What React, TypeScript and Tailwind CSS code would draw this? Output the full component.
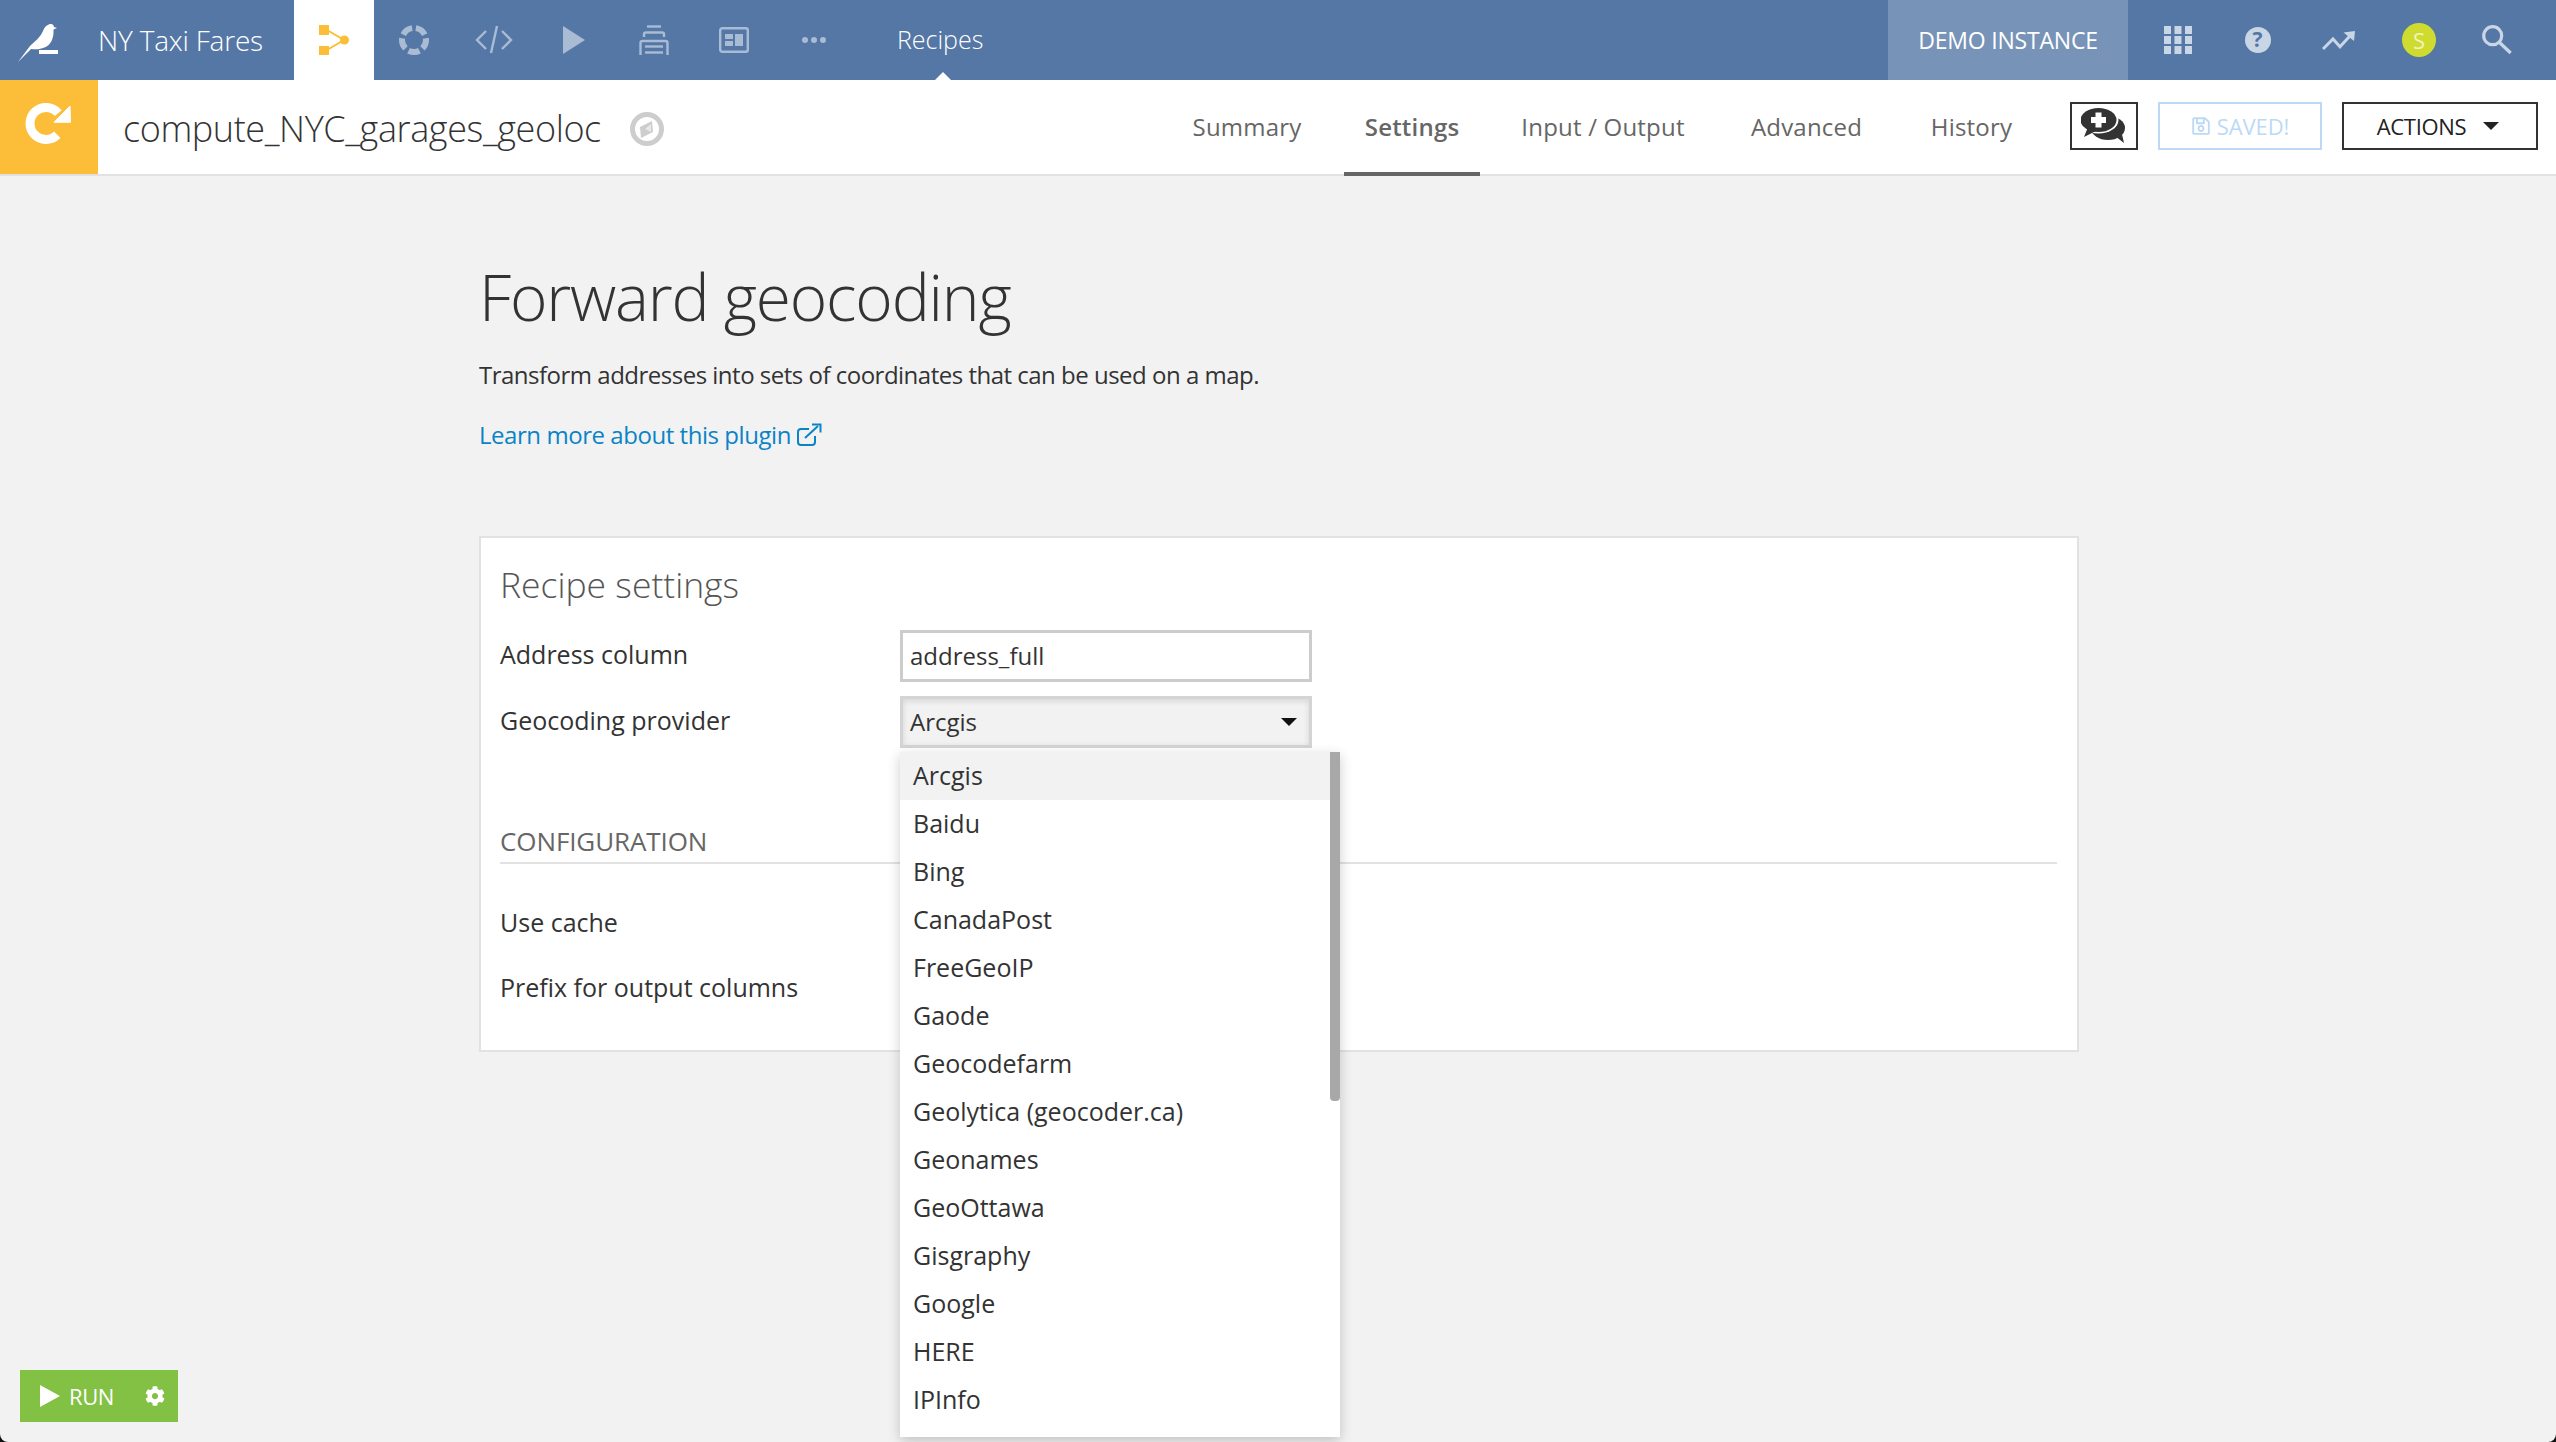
import { FaCog, FaRegSave } from 'react-icons/fa'

const providers = [
  'Arcgis',
  'Baidu',
  'Bing',
  'CanadaPost',
  'FreeGeoIP',
  'Gaode',
  'Geocodefarm',
  'Geolytica (geocoder.ca)',
  'Geonames',
  'GeoOttawa',
  'Gisgraphy',
  'Google',
  'HERE',
  'IPInfo',
]

const tabs = [
  { label: 'Summary', width: 'w-[194px]' },
  { label: 'Settings', width: 'w-[136px]', active: true },
  { label: 'Input / Output', width: 'w-[246px]' },
  { label: 'Advanced', width: 'w-[161px]' },
  { label: 'History', width: 'w-[169px]' },
]

const BirdLogo = () => (
  <svg width="44" height="44" viewBox="0 0 44 44" className="fill-white">
    <g transform="translate(0 4)">
      <path d="M0 40 L12 24 C16 20 22 16 25 9 C27 4 30 2 33 2 C35 2 36 4 36 5 L39 6 L35.5 7.5 C36 16 33 24 25 26 C20 28 16 27 13 27 Z" />
      <rect x="21" y="28" width="19" height="4" />
    </g>
  </svg>
)

const FlowIcon = () => (
  <svg width="30" height="30" viewBox="0 0 30 30">
    <rect x="0" y="0" width="10" height="10" fill="#fcbd38" />
    <rect x="0" y="21" width="10" height="9" fill="#fcbd38" />
    <circle cx="25.5" cy="15" r="4.5" fill="#fcbd38" />
    <path d="M8 5 L25 15 L8 25" fill="none" stroke="#fcbd38" strokeWidth="2" />
  </svg>
)

const CycleIcon = () => (
  <svg width="30" height="30" viewBox="0 0 30 30">
    <circle
      cx="15"
      cy="15"
      r="12"
      fill="none"
      stroke="#a9bcd4"
      strokeWidth="6"
      pathLength="100"
      strokeDasharray="15 5"
      strokeDashoffset="-2.5"
      transform="rotate(-90 15 15)"
    />
  </svg>
)

const CodeIcon = () => (
  <svg width="38" height="30" viewBox="0 0 38 30" fill="none" stroke="#a9bcd4" strokeWidth="2.4">
    <path d="M11 6 L2 15 L11 24" />
    <path d="M27 6 L36 15 L27 24" />
    <path d="M22 1 L16 28" />
  </svg>
)

const PlayIcon = () => (
  <svg width="24" height="28" viewBox="0 0 24 28">
    <path d="M1 0 L23 14 L1 28 Z" fill="#a9bcd4" />
  </svg>
)

const StackIcon = () => (
  <svg width="30" height="30" viewBox="0 0 30 30" fill="none" stroke="#a9bcd4" strokeWidth="2.4">
    <path d="M8 1.5 H22" />
    <path d="M5 12 V9 Q5 7.5 7 7.5 H23 Q25 7.5 25 9 V12" />
    <path d="M1.5 30 V18 Q1.5 16 3.5 16 H26.5 Q28.5 16 28.5 18 V30" />
    <path d="M6 21.5 H24" />
    <path d="M6 27.5 H24" />
  </svg>
)

const DashboardIcon = () => (
  <svg width="30" height="26" viewBox="0 0 30 26">
    <rect x="1.2" y="1.2" width="27.6" height="23.6" rx="2" fill="none" stroke="#a9bcd4" strokeWidth="2.4" />
    <rect x="6" y="7" width="8" height="5" fill="#a9bcd4" />
    <rect x="6" y="14" width="8" height="5" fill="#a9bcd4" />
    <rect x="16" y="7" width="8" height="12" fill="#a9bcd4" />
  </svg>
)

const DotsIcon = () => (
  <svg width="26" height="8" viewBox="0 0 26 8" fill="#a9bcd4">
    <circle cx="4" cy="4" r="3" />
    <circle cx="13" cy="4" r="3" />
    <circle cx="22" cy="4" r="3" />
  </svg>
)

const RefreshIcon = () => (
  <svg width="50" height="50" viewBox="0 0 50 50">
    <path d="M34.3 11.2 A16 16 0 1 0 33.3 32.8" fill="none" stroke="#fff" strokeWidth="9" />
    <path d="M46 4 L46.5 20.3 L30 20.3 Z" fill="#fff" stroke="#fff" strokeWidth="1" strokeLinejoin="round" />
  </svg>
)

const CompassIcon = () => (
  <svg width="36" height="36" viewBox="0 0 36 36">
    <circle cx="18" cy="18" r="14.5" fill="none" stroke="#cdcdcd" strokeWidth="5" />
    <path d="M11 16 L23 10 L24 21 L12 27 Z" fill="#cdcdcd" />
    <path d="M16 18 L22 13 L22 21 Z" fill="#e8e8e8" />
  </svg>
)

const GridIcon = () => (
  <svg width="28" height="28" viewBox="0 0 28 28" fill="#c9d6e5">
    <rect x="0" y="0" width="7" height="8" />
    <rect x="10.5" y="0" width="7" height="8" />
    <rect x="21" y="0" width="7" height="8" />
    <rect x="0" y="10" width="7" height="8" />
    <rect x="10.5" y="10" width="7" height="8" />
    <rect x="21" y="10" width="7" height="8" />
    <rect x="0" y="20" width="7" height="8" />
    <rect x="10.5" y="20" width="7" height="8" />
    <rect x="21" y="20" width="7" height="8" />
  </svg>
)

const TrendIcon = () => (
  <svg width="34" height="26" viewBox="0 0 34 26">
    <path d="M1 22 L11 12 L18 19.7 L29.7 7" fill="none" stroke="#c9d6e5" strokeWidth="3" />
    <path d="M21.5 5.5 L33 4 L32 14 Z" fill="#c9d6e5" />
  </svg>
)

const SearchIcon = () => (
  <svg width="30" height="30" viewBox="0 0 30 30" fill="none" stroke="#c9d6e5" strokeWidth="3.2">
    <circle cx="10.7" cy="10.7" r="9" />
    <path d="M17 17 L28.7 28" />
  </svg>
)

const ChatPlusIcon = () => (
  <svg width="46" height="40" viewBox="0 0 46 40">
    {/* 뒤쪽 말풍선 */}
    <ellipse cx="27" cy="22" rx="17" ry="12" fill="#333" />
    <path d="M34 30 L43 37 L40 24 Z" fill="#333" />
    {/* 앞쪽 말풍선 */}
    <ellipse cx="17.5" cy="14" rx="20" ry="13.5" fill="#fff" />
    <ellipse cx="17.5" cy="14" rx="18" ry="12" fill="#333" />
    <path d="M7 21 L3 31 L15 25 Z" fill="#333" />
    <path d="M14.5 6.5 H20.5 V11 H25 V17 H20.5 V21.5 H14.5 V17 H10 V11 H14.5 Z" fill="#fff" />
  </svg>
)

const ExternalIcon = () => (
  <svg width="26" height="24" viewBox="0 0 26 24" fill="none" stroke="#0a84c6" strokeWidth="2">
    <path d="M19 13 V19 Q19 22 16 22 H5 Q2 22 2 19 V9 Q2 6 5 6 H13" />
    <path d="M9 15 L22 3" />
    <path d="M16 1.5 H24.5 V9.5" />
  </svg>
)

const Caret = ({ className }: { className: string }) => <span className={`inline-block h-0 w-0 border-x-[8px] border-t-[8px] border-x-transparent ${className}`} />

const NavSlot = ({ children }: { children: React.ReactNode }) => <div className="flex h-full w-20 items-center justify-center">{children}</div>

export default function App() {
  return (
    <div className="h-[1442px] w-[2556px] bg-[#111]">
      <div className="relative h-full w-full overflow-hidden rounded-b-[8px] bg-[#f2f2f2] font-['Open_Sans','Noto_Sans',sans-serif] text-[24px] text-[#333]">
        {/* 상단 내비게이션 */}
        <header className="flex h-20 items-center bg-[#5577a5] text-white">
          <div className="flex h-full w-[294px] items-center">
            <div className="ml-[18px] flex w-[80px]">
              <BirdLogo />
            </div>
            <span className="text-[28px] font-light tracking-[-0.2px]">NY Taxi Fares</span>
          </div>
          <div className="flex h-full w-20 items-center justify-center bg-white">
            <FlowIcon />
          </div>
          <NavSlot><CycleIcon /></NavSlot>
          <NavSlot><CodeIcon /></NavSlot>
          <NavSlot><PlayIcon /></NavSlot>
          <NavSlot><StackIcon /></NavSlot>
          <NavSlot><DashboardIcon /></NavSlot>
          <NavSlot><DotsIcon /></NavSlot>
          <div className="relative ml-[43px] flex h-full items-center">
            <span className="text-[25px] font-light text-white">Recipes</span>
            <span className="absolute bottom-0 left-[38px] h-0 w-0 border-x-[8px] border-b-[8px] border-x-transparent border-b-white" />
          </div>
          <div className="ml-auto flex h-full w-[240px] items-center justify-center bg-[#7793b8] text-[23px] tracking-[-0.2px]">DEMO INSTANCE</div>
          <div className="flex h-full w-[428px] items-center">
            <div className="flex w-[98px] justify-center pl-[1px]"><GridIcon /></div>
            <div className="flex w-[62px] justify-center pl-[1px]">
              <span className="flex h-[26px] w-[26px] items-center justify-center rounded-full bg-[#c9d6e5] text-[21px] font-bold text-[#5577a5]">?</span>
            </div>
            <div className="flex w-[102px] justify-center"><TrendIcon /></div>
            <div className="flex w-[56px] justify-center pl-[2px]">
              <span className="flex h-[34px] w-[34px] items-center justify-center rounded-full bg-[#cfdc2f] text-[22px] text-[#f0f4c0]">S</span>
            </div>
            <div className="flex w-[100px] justify-center pl-[2px]"><SearchIcon /></div>
          </div>
        </header>

        {/* 레시피 헤더 */}
        <div className="flex h-24 items-stretch border-b-2 border-[#e2e2e2] bg-white">
          <div className="flex h-[94px] w-[98px] items-center justify-center bg-[#fcbd38]">
            <RefreshIcon />
          </div>
          <div className="ml-[25px] flex w-[1027px] items-center pt-1">
            <span className="text-[36px] font-light tracking-[-0.4px]">compute_NYC_garages_geoloc</span>
            <span className="ml-[28px] flex"><CompassIcon /></span>
          </div>
          <nav className="flex h-[94px] tracking-[0.2px] text-[#666]">
            {tabs.map(tab => (
              <div key={tab.label} className={`relative flex items-center justify-center ${tab.width} ${tab.active ? 'font-semibold' : ''}`}>
                {tab.label}
                {tab.active && <span className="absolute bottom-[-2px] left-0 h-1 w-full bg-[#666]" />}
              </div>
            ))}
          </nav>
          <div className="ml-[14px] flex items-start gap-[20px] pt-[22px]">
            <div className="flex h-12 w-[68px] items-center justify-center border-2 border-[#333] bg-white">
              <ChatPlusIcon />
            </div>
            <div className="flex h-12 w-[164px] items-center justify-center gap-[6px] border-2 border-[#bcd9f5] text-[22px] tracking-[-0.1px] text-[#bcd9f5]">
              <FaRegSave size={20} />
              SAVED!
            </div>
            <div className="flex h-12 w-[196px] items-center justify-center gap-[17px] border-2 border-[#333] pr-1 text-[22px] tracking-[-0.3px] text-[#222]">
              ACTIONS
              <Caret className="border-t-[#222]" />
            </div>
          </div>
        </div>

        {/* 본문 */}
        <main className="ml-[479px] w-[1600px] pt-[81px]">
          <h1 className="h-20 text-[64px] leading-[80px] font-light tracking-[-1.2px]">Forward geocoding</h1>
          <p className="mt-5 h-9 leading-9 tracking-[-0.5px]">Transform addresses into sets of coordinates that can be used on a map.</p>
          <a className="mt-6 flex h-9 items-center gap-[5px] leading-9 tracking-[-0.45px] text-[#0a84c6]">
            Learn more about this plugin
            <ExternalIcon />
          </a>

          <section className="mt-[83px] h-[516px] border-2 border-[#e2e2e2] bg-white pt-[22px] pr-5 pl-[19px] text-[25px]">
            <h2 className="h-12 text-[35.5px] leading-12 font-light text-[#555]">Recipe settings</h2>
            <div className="mt-[22px] flex h-[52px] items-center">
              <label className="w-[400px] pb-[3px]">Address column</label>
              <div className="flex h-[52px] w-[412px] items-center border-[3px] border-[#ccc] bg-white pl-[7px] text-[24px]">address_full</div>
            </div>
            <div className="mt-[14px] flex h-[52px] items-center">
              <label className="w-[400px] pb-[3px]">Geocoding provider</label>
              <div className="flex h-[52px] w-[412px] items-center justify-between border-[3px] border-[#d4d4d4] bg-[#f2f2f2] pr-[12px] pl-[7px] text-[24px] shadow-[inset_0_2px_6px_rgba(0,0,0,0.12)]">
                Arcgis
                <Caret className="border-t-[#111]" />
              </div>
            </div>
            <div className="mt-[78px] h-[38px] border-b-2 border-[#e2e2e2] text-[26px] leading-[31px] tracking-[-0.1px] text-[#666]">CONFIGURATION</div>
            <div className="mt-[39px] flex h-10 items-center">Use cache</div>
            <div className="mt-[25px] flex h-10 items-center">Prefix for output columns</div>
          </section>
        </main>

        {/* 드롭다운 */}
        <div className="absolute top-[752px] left-[900px] h-[685px] w-[440px] overflow-hidden bg-white text-[25px] shadow-[0_4px_12px_rgba(0,0,0,0.2)]">
          {providers.map((name, i) => (
            <div key={name} className={`flex h-12 items-center pl-[13px] ${i === 0 ? 'bg-[#f2f2f2]' : ''}`}>{name}</div>
          ))}
          <div className="absolute top-0 right-0 h-[349px] w-[10px] rounded-b-[4px] bg-[#a8a8a8]" />
        </div>

        {/* 실행 버튼 */}
        <div className="absolute top-[1370px] left-5 flex h-[52px] w-[158px] items-center bg-[#82c143] pl-5 text-white">
          <svg width="20" height="22" viewBox="0 0 20 22"><path d="M0 0 L20 11 L0 22 Z" fill="#fff" /></svg>
          <span className="ml-[9px] text-[22px] tracking-[-0.4px]">RUN</span>
          <FaCog size={20} className="ml-[31px]" />
        </div>
      </div>
    </div>
  )
}
